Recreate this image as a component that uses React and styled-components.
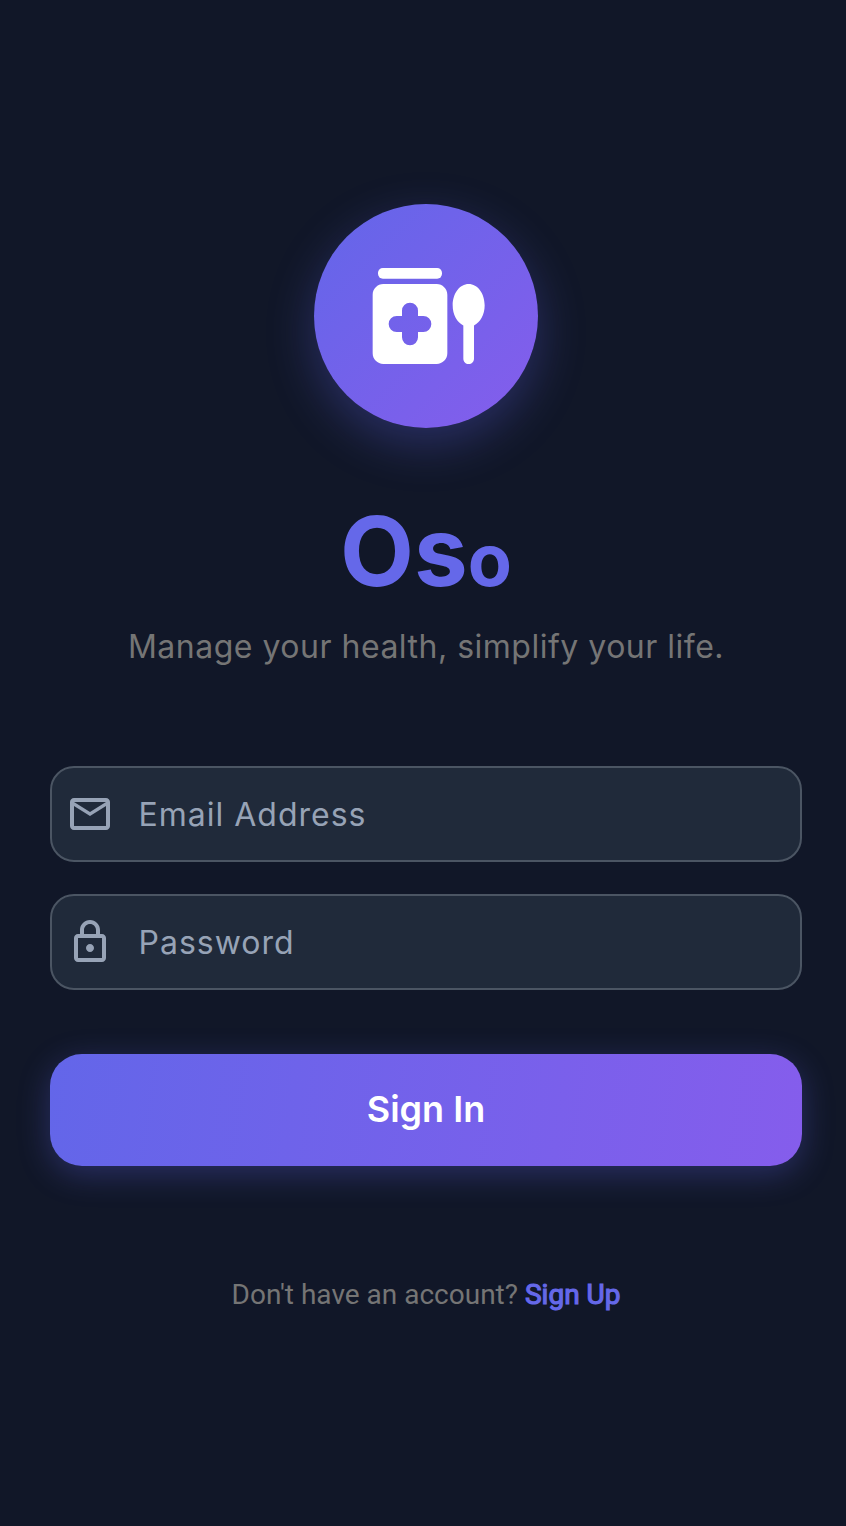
import React, { useState } from "react";
import styled, { createGlobalStyle } from "styled-components";
import { MdOutlineEmail, MdOutlineLock } from "react-icons/md";

const GlobalStyle = createGlobalStyle`
    * {
        box-sizing: border-box;
    }
    body {
        margin: 0;
        background: #111728;
    }
`;

const MedicineIcon = () => (
    <svg width="128" height="128" viewBox="0 0 24 24" fill="currentColor">
        <rect x="3" y="3" width="12" height="2" rx="0.9" />
        <path
            fillRule="evenodd"
            d="M14 6H4c-1.1 0-2 .9-2 2v11c0 1.1.9 2 2 2h10c1.1 0 2-.9 2-2V8c0-1.1-.9-2-2-2zm-2.500 9h-1v1a1.500 1.500 0 0 1-3 0v-1h-1a1.500 1.500 0 0 1 0-3h1v-1a1.500 1.500 0 0 1 3 0v1h1a1.500 1.500 0 0 1 0 3z"
        />
        <path d="M20 6c-1.680 0-3 1.760-3 4 0 1.770.83 3.220 2 3.760V20c0 .55.45 1 1 1s1-.45 1-1v-6.240c1.170-.54 2-1.990 2-3.760 0-2.240-1.320-4-3-4z" />
    </svg>
);

const LoginPage = () => {
    const [email, setEmail] = useState("");
    const [password, setPassword] = useState("");

    const handleSubmit = (e) => {
        e.preventDefault();
    };

    return (
        <Container>
            <GlobalStyle />
            <Logo>
                <MedicineIcon />
            </Logo>
            <HeadingText>
                Os<SmallLetter>o</SmallLetter>
            </HeadingText>
            <Description>Manage your health, simplify your life.</Description>
            <Form onSubmit={handleSubmit}>
                <Label>
                    <MdOutlineEmail size={48} />
                    <InputText type="email" placeholder="Email Address" value={email} onChange={(e) => setEmail(e.target.value)} />
                </Label>
                <Label>
                    <MdOutlineLock size={48} />
                    <InputText type="password" placeholder="Password" value={password} onChange={(e) => setPassword(e.target.value)} />
                </Label>
                <Button type="submit">Sign In</Button>
            </Form>
            <Footer>
                Don't have an account? <LinkText>Sign Up</LinkText>
            </Footer>
        </Container>
    );
};

const Container = styled.section`
    display: flex;
    flex-direction: column;
    align-items: center;
    height: 1526px;
    padding: 204px 44px 0 50px;
    background: #111728;
    font-family: Inter, "Liberation Sans", sans-serif;
`;
const Logo = styled.div`
    display: flex;
    justify-content: center;
    align-items: center;
    width: 224px;
    height: 224px;
    border-radius: 50%;
    color: #fff;
    background: linear-gradient(135deg, #6366e9, #855dec);
    box-shadow: 0 16px 48px rgba(99, 102, 241, 0.3);
`;
const HeadingText = styled.h1`
    margin: 63px 0 0;
    height: 120px;
    line-height: 120px;
    font-size: 96px;
    font-weight: 700;
    color: #6568e9;
`;
const SmallLetter = styled.span`
    font-size: 72px;
`;
const Description = styled.p`
    margin: 16px 0 0;
    height: 40px;
    line-height: 40px;
    font-size: 32px;
    letter-spacing: 0.5px;
    color: #757575;
    white-space: nowrap;
`;
const Form = styled.form`
    display: flex;
    flex-direction: column;
    width: 100%;
    margin-top: 99px;
`;
const Label = styled.label`
    display: flex;
    align-items: center;
    gap: 24.5px;
    height: 96px;
    margin-bottom: 32px;
    padding: 0 14px;
    border: 2px solid #4b5563;
    border-radius: 24px;
    color: #97a3b6;
    background: #202a3a;
`;
const InputText = styled.input`
    flex: 1;
    min-width: 0;
    padding: 0;
    border: none;
    outline: none;
    background: transparent;
    color: #fff;
    font-family: inherit;
    font-size: 32px;
    letter-spacing: 1px;
    &::placeholder {
        color: #97a3b6;
    }
`;
const Button = styled.button`
    height: 112px;
    margin-top: 32px;
    padding: 0 0 2px;
    border: none;
    border-radius: 32px;
    color: #fff;
    background: linear-gradient(98deg, #6366e9, #855dec);
    box-shadow: 0 8px 32px rgba(99, 102, 241, 0.3);
    font-family: inherit;
    font-size: 36px;
    font-weight: 600;
    cursor: pointer;
`;
const Footer = styled.p`
    margin: 109px 0 0;
    line-height: 40px;
    font-family: Roboto, sans-serif;
    font-size: 28px;
    color: #757575;
`;
const LinkText = styled.a`
    color: #6568e9;
    font-weight: 400;
    -webkit-text-stroke: 1.2px #6568e9;
    cursor: pointer;
`;
export default LoginPage;
